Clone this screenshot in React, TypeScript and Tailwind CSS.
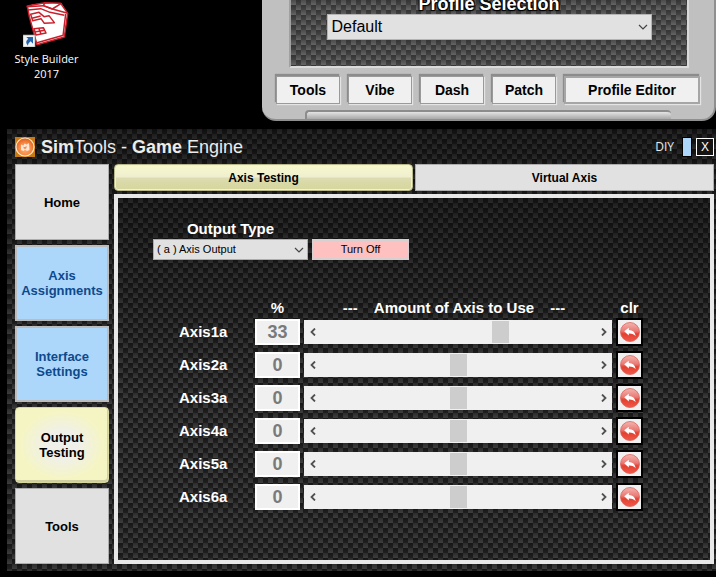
import React, { useState } from 'react';

const CARBON_DARK =
  'bg-[linear-gradient(to_bottom,rgba(0,0,0,0.35),rgba(0,0,0,0)_55%),linear-gradient(to_bottom,rgba(0,0,0,0.3),rgba(0,0,0,0)),repeating-conic-gradient(#202020_0_25%,#3e3e3e_0_50%)] bg-[length:100%_100%,5px_5px,10px_10px]';
const CARBON_LIGHT =
  'bg-[linear-gradient(to_bottom,rgba(0,0,0,0.25),rgba(0,0,0,0)),repeating-conic-gradient(#444444_0_25%,#646464_0_50%)] bg-[length:5px_5px,10px_10px]';

const Chevron: React.FC = () => (
  <svg
    viewBox="0 0 10 6"
    className="pointer-events-none absolute right-1 top-1/2 h-[6px] w-[10px] -translate-y-1/2"
    fill="none"
    stroke="#444"
    strokeWidth="1.2"
  >
    <path d="M1 1l4 4 4-4" />
  </svg>
);

const StyleBuilderIcon: React.FC = () => (
  <svg viewBox="69 0 141 141" className="h-[47px] w-[47px]" fill="none">
    <path d="M82 18L104 12L160 9L184 10L203 40L193 111L111 134L104 106L88 50Z" fill="#fff" />
    <g stroke="#c9202c" strokeWidth="4.5" strokeLinejoin="round">
      <path d="M82 18L135 8L182 10L203 40L193 111L111 134L88 50Z" />
      <path d="M80 20L130 17L157 27L203 40" />
      <path d="M84 30L122 26L150 37L193 46" />
      <path d="M184 10L157 27L130 17L135 8" />
      <path d="M92 43L117 37L132 50L147 47L163 68L133 70L123 56L98 62Z" />
      <path d="M96 55L122 48" />
      <path d="M102 86L130 83L138 99L108 105Z" />
      <path d="M104 96L134 91M116 84L123 102" />
      <path d="M197 42L189 108M111 128L190 106" />
    </g>
    <path d="M69 105h36v36H69z" fill="#f1f3f5" stroke="#9a9a9a" strokeWidth="2" />
    <path d="M79 111h20v20l-7-7c-6 5-8 8-8 13-8-9-6-16 1-20z" fill="#2463ad" />
  </svg>
);

const SimToolsIcon: React.FC = () => (
  <svg viewBox="0 0 20 20" className="h-5 w-5">
    <defs>
      <radialGradient id="sim-ball" cx="50%" cy="60%" r="60%">
        <stop offset="0" stopColor="#ffb27a" />
        <stop offset="0.55" stopColor="#f58a45" />
        <stop offset="1" stopColor="#df5a1a" />
      </radialGradient>
    </defs>
    <rect width="20" height="20" fill="#c67a12" />
    <circle cx="10" cy="10" r="9" fill="url(#sim-ball)" stroke="#ffe6c4" strokeWidth="1.2" />
    <path d="M6 7.500l2.500 1 1-2 2 1 2.500-1.500.5 7-2.500 1-2-1.500-1.500 1.500-2.500-1z" fill="#fff" opacity="0.75" />
    <path d="M8.500 9.500l1.500.8 1.500-1.500v2.400l-1.500.8-1.500-.8z" fill="#f08a4a" />
  </svg>
);

const ClearIcon: React.FC = () => (
  <svg viewBox="0 0 20 20" className="h-5 w-5">
    <defs>
      <linearGradient id="clear-ball" x1="0" y1="0" x2="0" y2="1">
        <stop offset="0" stopColor="#f2b5b0" />
        <stop offset="0.45" stopColor="#ea7a74" />
        <stop offset="0.6" stopColor="#e2402f" />
        <stop offset="1" stopColor="#f2584a" />
      </linearGradient>
    </defs>
    <circle cx="10" cy="10" r="9.5" fill="url(#clear-ball)" stroke="#d9635c" strokeWidth="0.8" />
    <path d="M4.200 9.300L8.800 5.800v2.100c3.800.2 6.400 2 6.800 6.300-1.500-2-3.400-2.900-6.800-2.800v2z" fill="#fff" />
  </svg>
);

const LauncherButton: React.FC<{ label: string; wide?: boolean }> = ({ label, wide }) => (
  <button
    className={`h-7 bg-[#f0f0f0] text-sm font-bold text-black shadow-[-1px_-2px_1px_#8c8c8c,1px_1px_1px_#e4e4e4] ${
      wide ? 'flex-1 border-2 border-[#a6a6a6]' : 'w-16 border border-[#9a9a9a]'
    }`}
  >
    {label}
  </button>
);

const Launcher: React.FC = () => (
  <section className="w-[454px] rounded-b-[14px] border-b-2 border-r-2 border-[#8f8f8f] bg-[#c0c0c0] pl-[14px] pr-[14px]">
    <div
      className={`ml-[13px] mr-[11px] flex h-[68px] flex-col items-center border-x-2 border-b-2 border-l-[#a0a0a0] border-r-[#dadada] border-b-[#dadada] bg-origin-content ${CARBON_LIGHT}`}
    >
      <div className="flex h-[14px] items-end">
        <label
          htmlFor="profile"
          className="text-lg font-bold leading-5 text-white [text-shadow:1px_1px_1px_#000,-1px_1px_1px_#000,1px_-1px_1px_#000]"
        >
          Profile Selection
        </label>
      </div>
      <div className="relative w-[325px]">
        <select
          id="profile"
          className="h-[26px] w-full appearance-none border border-[#b4b4b4] bg-[#e1e1e1] px-1 text-base leading-6 text-black"
        >
          <option>Default</option>
        </select>
        <Chevron />
      </div>
    </div>
    <div className="mt-2 flex gap-2">
      <LauncherButton label="Tools" />
      <LauncherButton label="Vibe" />
      <LauncherButton label="Dash" />
      <LauncherButton label="Patch" />
      <LauncherButton label="Profile Editor" wide />
    </div>
    <div className="mx-[29px] mt-[6px] h-[9px] rounded-t-sm border-l-2 border-t-2 border-[#8c8c8c] bg-gradient-to-b from-[#e4e4e4] to-[#a8a8a8]" />
  </section>
);

const NAV_STYLES = {
  plain: 'border border-[#adadad] bg-[#e1e1e1] text-black',
  linked: 'border-2 border-[#bcbcbc] bg-[#add6fb] text-[#0d4a8c]',
  active:
    'rounded-sm border border-[#d8d8a0] bg-[radial-gradient(ellipse_at_center,#f0f0ea_25%,#f5f5c4_65%)] px-4 text-black shadow-[inset_-1px_-2px_0_#cfcfa0]',
};

const NAV_ITEMS: { label: string; style: keyof typeof NAV_STYLES }[] = [
  { label: 'Home', style: 'plain' },
  { label: 'Axis Assignments', style: 'linked' },
  { label: 'Interface Settings', style: 'linked' },
  { label: 'Output Testing', style: 'active' },
  { label: 'Tools', style: 'plain' },
];

const AxisRow: React.FC<{ name: string; initial: number }> = ({ name, initial }) => {
  const [value, setValue] = useState(initial);
  const step = (delta: number) => setValue(Math.max(-100, Math.min(100, value + delta)));

  return (
    <>
      <label htmlFor={name} className="text-[15px] font-bold leading-5 text-white">
        {name}
      </label>
      <input
        aria-label={`${name} percent`}
        className="h-[26px] w-full border-2 border-white bg-[#f0f0f0] text-center text-lg font-bold leading-5 text-[#7a7a7a]"
        value={value}
        readOnly
      />
      <div className="flex h-6 bg-[#f0f0f0]">
        <button aria-label={`Decrease ${name}`} className="flex w-[17px] items-center justify-center" onClick={() => step(-1)}>
          <svg viewBox="0 0 6 8" className="h-2 w-[6px]" fill="none" stroke="#505050" strokeWidth="1.8">
            <path d="M5 0.500L1.500 4 5 7.500" />
          </svg>
        </button>
        <input
          id={name}
          type="range"
          min={-100}
          max={100}
          value={value}
          onChange={(e) => setValue(Number(e.target.value))}
          className="h-6 min-w-0 flex-1 appearance-none bg-transparent [&::-webkit-slider-thumb]:h-[22px] [&::-webkit-slider-thumb]:w-[17px] [&::-webkit-slider-thumb]:appearance-none [&::-webkit-slider-thumb]:bg-[#cdcdcd]"
        />
        <button aria-label={`Increase ${name}`} className="flex w-[17px] items-center justify-center" onClick={() => step(1)}>
          <svg viewBox="0 0 6 8" className="h-2 w-[6px]" fill="none" stroke="#505050" strokeWidth="1.8">
            <path d="M1 0.500L4.500 4 1 7.500" />
          </svg>
        </button>
      </div>
      <button
        aria-label={`Clear ${name}`}
        className="flex h-7 items-center justify-center border-2 border-black bg-[#f0f0f0]"
        onClick={() => setValue(0)}
      >
        <ClearIcon />
      </button>
    </>
  );
};

const OutputTesting: React.FC = () => (
  <div className={`flex-1 border-4 border-[#e8e8e8] pl-[61px] pr-[67px] pt-[21px] ${CARBON_DARK}`}>
    <div className="-ml-[26px] w-[256px]">
      <label htmlFor="output-type" className="block w-[155px] text-center text-[15px] font-bold leading-5 text-white">
        Output Type
      </label>
      <div className="flex gap-1 text-[11px]">
        <div className="relative w-[155px]">
          <select
            id="output-type"
            className="h-[21px] w-full appearance-none border border-[#adadad] bg-[#e1e1e1] px-[3px] text-black"
          >
            <option>( a ) Axis Output</option>
          </select>
          <Chevron />
        </div>
        <button className="h-[21px] flex-1 border-2 border-[#d8d0d0] bg-[#ffc0c0] text-black">Turn Off</button>
      </div>
    </div>

    <div className="mt-[38px] grid grid-cols-[72px_45px_1fr_27px] items-center gap-x-1 text-[15px] font-bold leading-5 text-white">
      <span />
      <span className="text-center">%</span>
      <span className="flex justify-center gap-4 pr-2">
        <span>---</span>
        <span>Amount of Axis to Use</span>
        <span>---</span>
      </span>
      <span className="text-center">clr</span>
    </div>
    <div className="grid grid-cols-[72px_45px_1fr_27px] items-center gap-x-1 gap-y-[5px]">
      <AxisRow name="Axis1a" initial={33} />
      <AxisRow name="Axis2a" initial={0} />
      <AxisRow name="Axis3a" initial={0} />
      <AxisRow name="Axis4a" initial={0} />
      <AxisRow name="Axis5a" initial={0} />
      <AxisRow name="Axis6a" initial={0} />
    </div>
  </div>
);

const GameEngine: React.FC = () => (
  <section className={`ml-[7px] mt-[8px] pb-[7px] pl-2 pr-[2px] ${CARBON_DARK}`}>
    <header className="flex h-[35px] items-center">
      <SimToolsIcon />
      <h1 className="ml-[6px] flex-1 text-lg leading-6 text-[#ececec]">
        <b>Sim</b>Tools - <b>Game</b> Engine
      </h1>
      <span className="mr-2 font-['Open_Sans',sans-serif] text-xs text-[#e8e8e8]">DIY</span>
      <span className="mr-1 h-5 w-[10px] border border-black bg-[#add6fb]" />
      <button
        aria-label="Close"
        className="flex h-[18px] w-[18px] items-center justify-center border border-white bg-[#151515] text-xs leading-4 text-white"
      >
        X
      </button>
    </header>
    <div className="flex gap-[5px]">
      <nav className="flex w-[94px] flex-col gap-[5px]">
        {NAV_ITEMS.map((item) => (
          <button key={item.label} className={`h-[76px] text-[13px] font-bold leading-[15px] ${NAV_STYLES[item.style]}`}>
            {item.label}
          </button>
        ))}
      </nav>
      <main className="flex flex-1 flex-col gap-[3px]">
        <div className="flex h-[27px] gap-[2px] text-xs font-bold text-black">
          <button className="flex-1 rounded-sm border border-[#b8b88a] bg-[linear-gradient(to_bottom,#f8f8cc,#efefd0_48%,#dcdcb0_52%,#d6d69c)] shadow-[inset_0_0_0_1px_#f4f4c0]">
            Axis Testing
          </button>
          <button className="flex-1 border border-[#adadad] bg-[#e1e1e1]">Virtual Axis</button>
        </div>
        <OutputTesting />
      </main>
    </div>
  </section>
);

export default function App() {
  return (
    <div className="min-h-screen overflow-hidden bg-black font-['Liberation_Sans',Arial,sans-serif]">
      <div className="flex justify-between">
        <a
          href="#style-builder"
          className="flex w-[93px] flex-col items-center text-center font-['Open_Sans',sans-serif] text-[11px] leading-[15px] text-white"
        >
          <StyleBuilderIcon />
          <span className="mt-1">
            Style Builder
            <br />
            2017
          </span>
        </a>
        <Launcher />
      </div>
      <GameEngine />
    </div>
  );
}
